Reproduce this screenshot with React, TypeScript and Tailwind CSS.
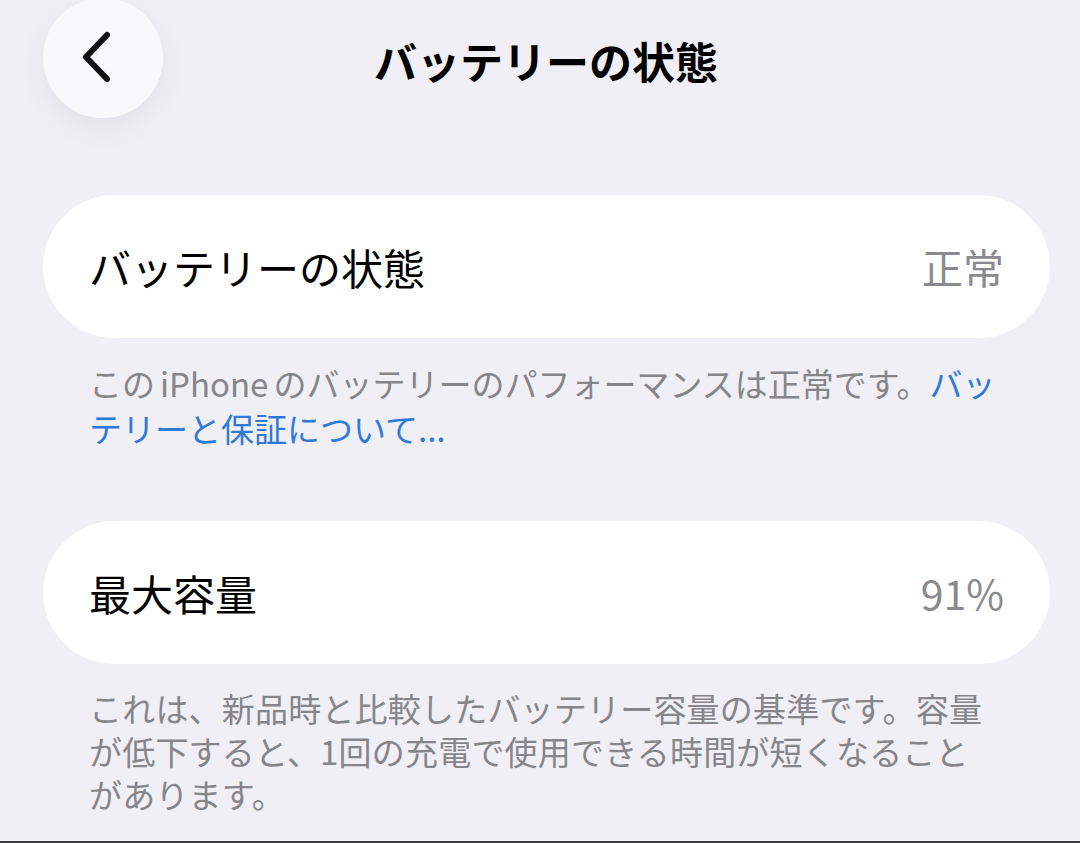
import React from 'react';

const jp = { fontFamily: '"Noto Sans CJK JP", "Noto Sans", sans-serif' };

function Row({ label, value }: { label: string; value: string }) {
  return (
    <div className="flex items-center justify-between h-[143px] ml-[43px] mr-[30px] pl-[46px] pr-[46px] bg-white rounded-full">
      <span className="text-[42px] leading-none text-black">{label}</span>
      <span className="text-[41px] leading-none text-[#8a8a8e]">{value}</span>
    </div>
  );
}

export default function App() {
  return (
    <div className="w-[1080px] h-[843px] bg-[#f0eff5] flex flex-col overflow-hidden" style={jp}>
      <div className="relative h-[120px] flex items-center justify-center">
        <button className="absolute left-[43px] top-[-2px] w-[120px] h-[120px] rounded-full bg-[#f9f9fb] shadow-[0_10px_30px_rgba(0,0,0,0.06)] flex items-center justify-center">
          <svg width="40" height="56" viewBox="0 0 40 56" className="-translate-x-[3px]">
            <path d="M27 5 L6 27 L27 49" fill="none" stroke="#111" strokeWidth="6" strokeLinecap="round" strokeLinejoin="round" />
          </svg>
        </button>
        <h1 className="pl-[12px] text-[43px] font-bold leading-none text-black">バッテリーの状態</h1>
      </div>

      <div className="mt-[75px]">
        <Row label="バッテリーの状態" value="正常" />
      </div>
      <div className="mt-[23px] pl-[89px] text-[33px] leading-[45px] text-[#85858a]">
        <div className="whitespace-nowrap">
          この<span className="ml-[5px] mr-[5px]">iPhone</span>のバッテリーのパフォーマンスは正常です。<span className="text-[#2f7ad8]">バッ</span>
        </div>
        <div className="whitespace-nowrap text-[#2f7ad8]">テリーと保証について...</div>
      </div>

      <div className="mt-[70px]">
        <Row label="最大容量" value="91%" />
      </div>
      <div className="mt-[23px] pl-[89px] text-[33px] tracking-[0.2px] leading-[43px] text-[#85858a]">
        <div className="whitespace-nowrap">これは、新品時と比較したバッテリー容量の基準です。容量</div>
        <div className="whitespace-nowrap">が低下すると、1回の充電で使用できる時間が短くなること</div>
        <div className="whitespace-nowrap">があります。</div>
      </div>

      <div className="mt-auto h-[2px] bg-[#3a3a3c]" />
    </div>
  );
}
